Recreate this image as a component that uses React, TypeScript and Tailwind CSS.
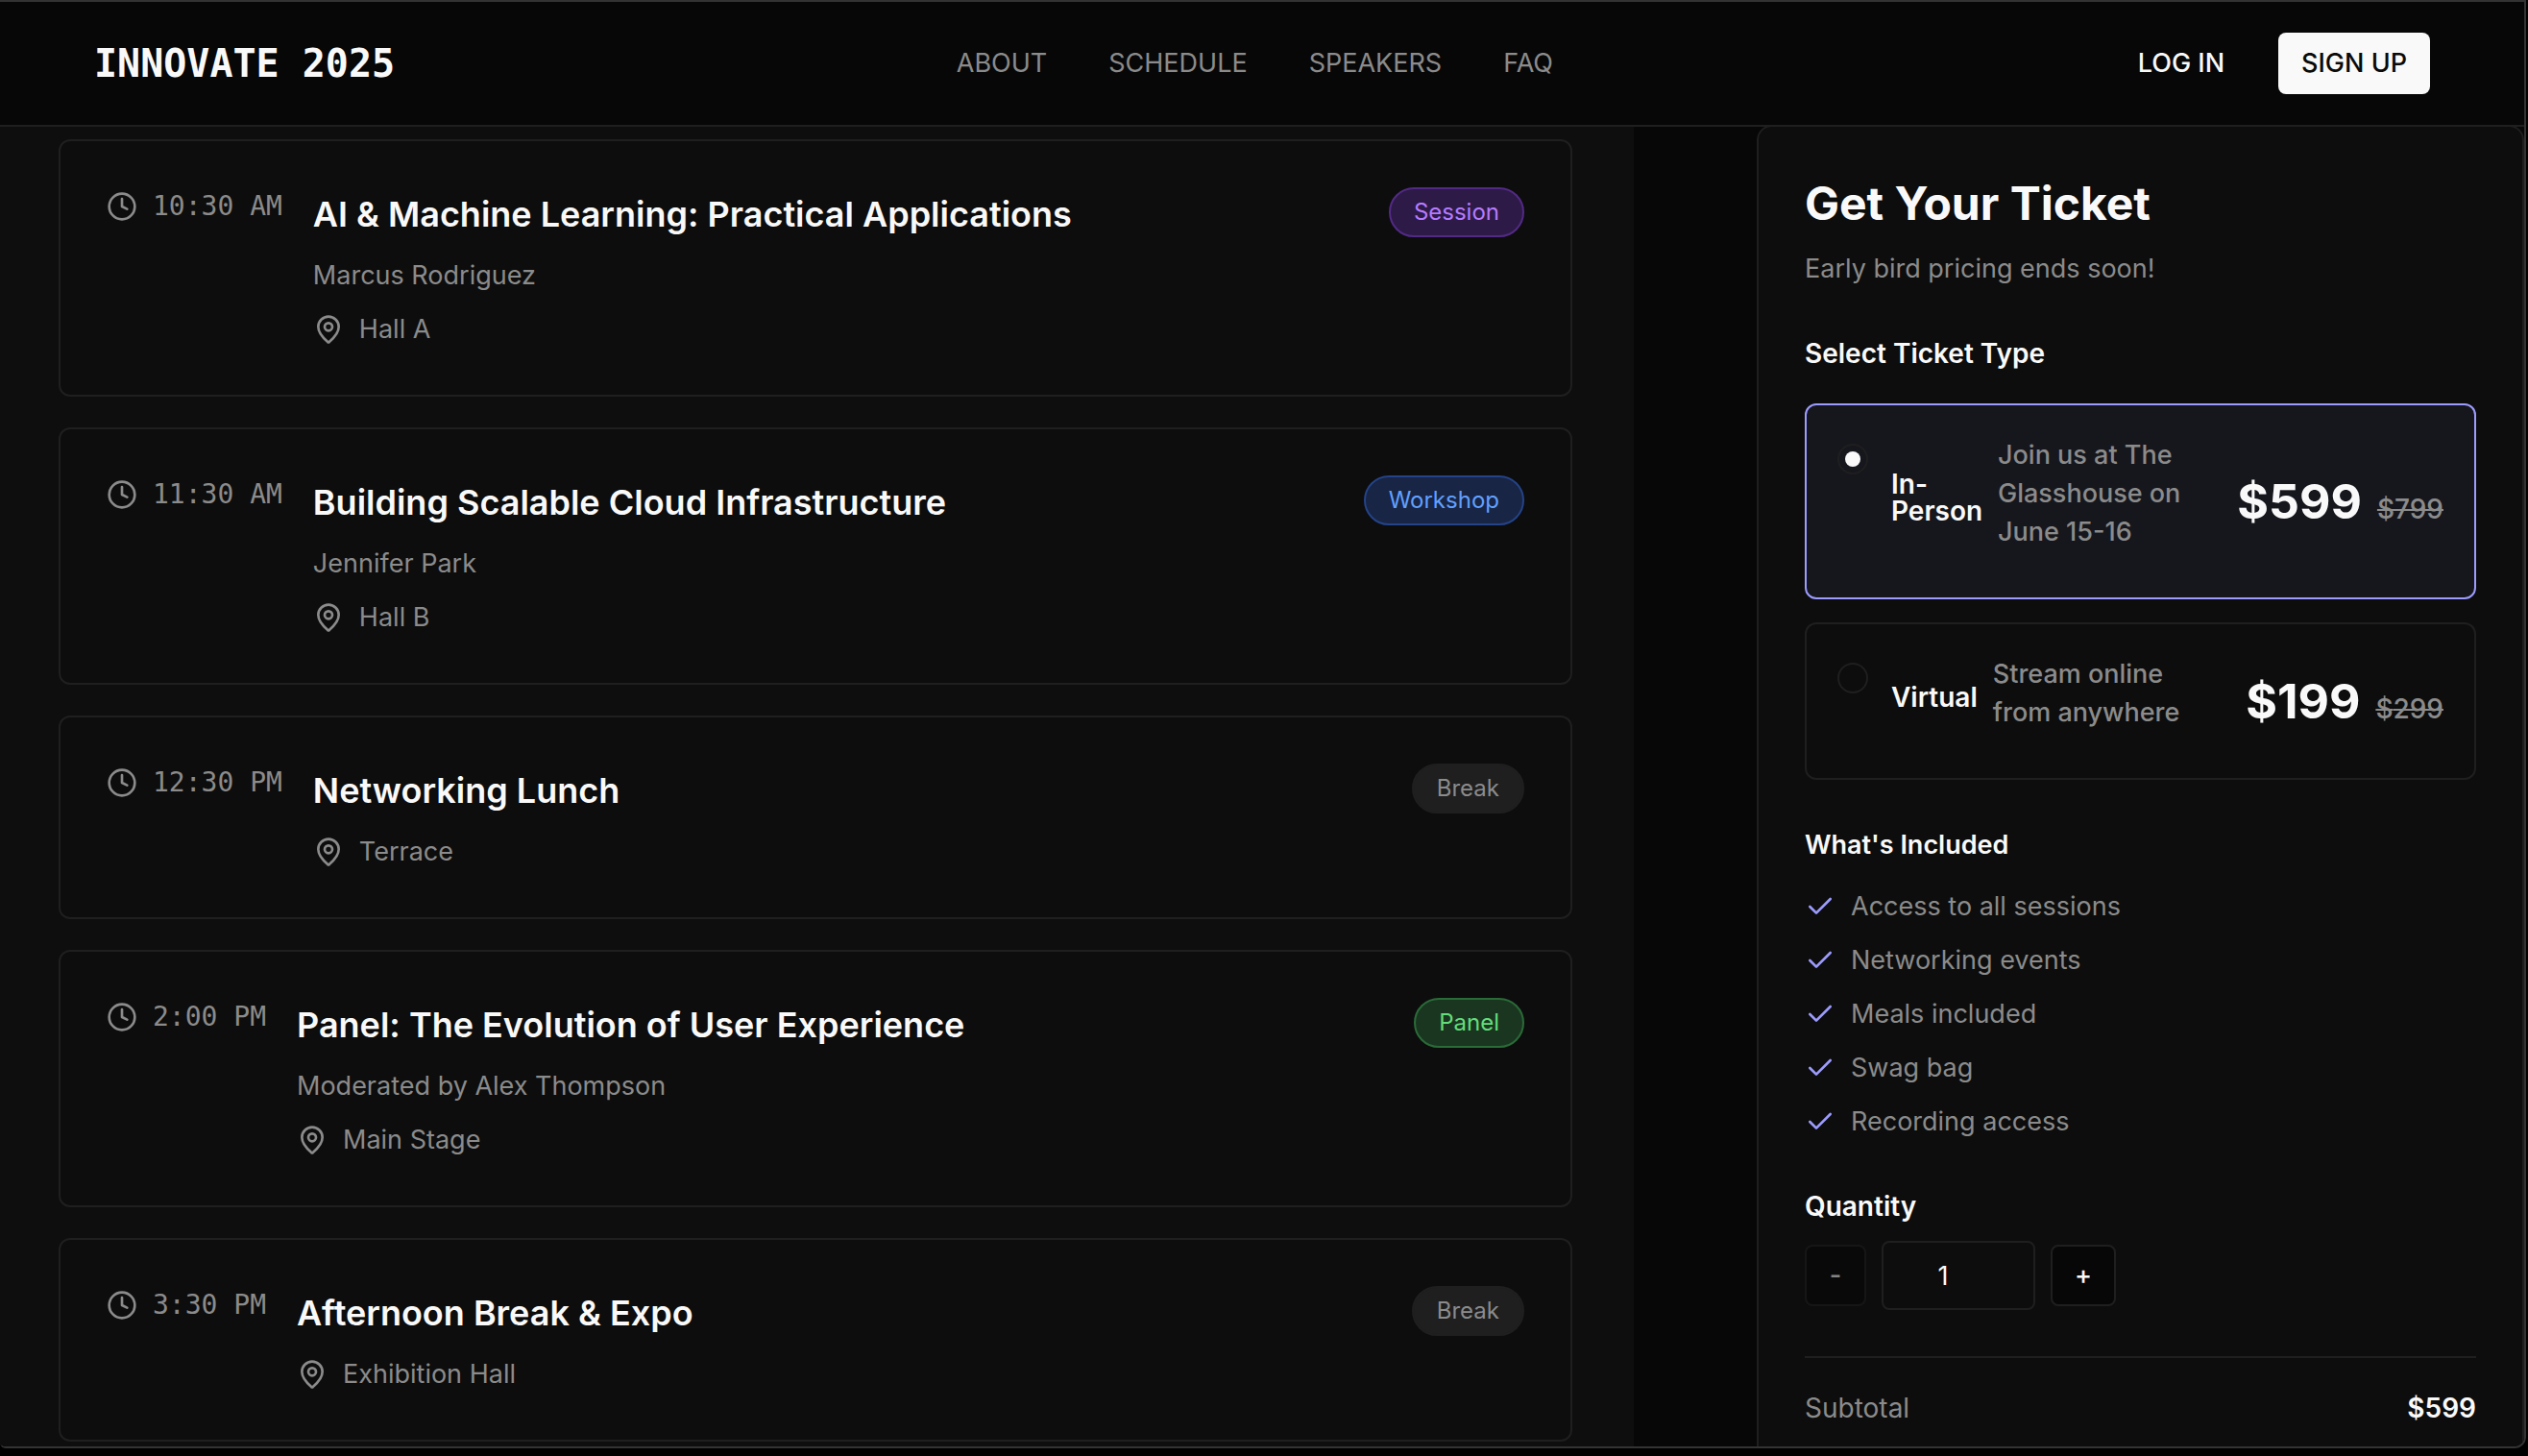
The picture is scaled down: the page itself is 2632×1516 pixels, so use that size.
import { Check, Clock, MapPin } from "lucide-react";
import { useState } from "react";

type Kind = "Session" | "Workshop" | "Break" | "Panel";

const badgeStyles: Record<Kind, string> = {
  Session: "border-[#522a86] bg-[#2e1a47] text-[#b57bff]",
  Workshop: "border-[#244388] bg-[#182544] text-[#61a0ff]",
  Panel: "border-[#2a6b38] bg-[#1b3620] text-[#62dd7b]",
  Break: "border-[#1f1f1f] bg-[#1f1f1f] text-[#8b8b8b]",
};

const sessions: { time: string; title: string; speaker?: string; place: string; kind: Kind }[] = [
  { time: "10:30 AM", title: "AI & Machine Learning: Practical Applications", speaker: "Marcus Rodriguez", place: "Hall A", kind: "Session" },
  { time: "11:30 AM", title: "Building Scalable Cloud Infrastructure", speaker: "Jennifer Park", place: "Hall B", kind: "Workshop" },
  { time: "12:30 PM", title: "Networking Lunch", place: "Terrace", kind: "Break" },
  { time: "2:00 PM", title: "Panel: The Evolution of User Experience", speaker: "Moderated by Alex Thompson", place: "Main Stage", kind: "Panel" },
  { time: "3:30 PM", title: "Afternoon Break & Expo", place: "Exhibition Hall", kind: "Break" },
];

const tickets = [
  { id: "in-person", name: "In-Person", nameWidth: "w-[95px]", text: "Join us at The Glasshouse on June 15-16", price: 599, old: 799 },
  { id: "virtual", name: "Virtual", nameWidth: "", text: "Stream online from anywhere", price: 199, old: 299 },
];

const included = ["Access to all sessions", "Networking events", "Meals included", "Swag bag", "Recording access"];

function Header() {
  return (
    <header className="relative z-10 flex h-[130px] shrink-0 items-center justify-between border-b-2 border-[#1f1f1f] bg-[#070707] px-[98px]">
      <a href="#top" className="font-['DejaVu_Sans_Mono',monospace] text-[40px] leading-[56px] font-bold whitespace-nowrap">
        INNOVATE 2025
      </a>
      <nav className="flex gap-16 text-[#8b8b8b]">
        <a href="#about">ABOUT</a>
        <a href="#schedule">SCHEDULE</a>
        <a href="#speakers">SPEAKERS</a>
        <a href="#faq">FAQ</a>
      </nav>
      <div className="flex items-center gap-8 font-medium">
        <button type="button" className="h-16 px-6">LOG IN</button>
        <button type="button" className="h-16 rounded-lg bg-[#f9f9f9] px-6 text-[#0a0a0a]">SIGN UP</button>
      </div>
    </header>
  );
}

function Schedule() {
  return (
    <section id="schedule" className="min-w-0 flex-1 bg-[#0e0e0e] pt-[13px] pr-16 pl-[61px]">
      <ul className="flex flex-col gap-8">
        {sessions.map((s) => (
          <li key={s.time} className="flex items-start gap-8 rounded-xl border-2 border-[#1f1f1f] bg-[#0d0d0d] p-12">
            <div className="flex items-center gap-4 text-[#8b8b8b]">
              <Clock className="size-8" aria-hidden />
              <time className="font-['DejaVu_Sans_Mono',monospace] text-[28px] leading-10 whitespace-nowrap">{s.time}</time>
            </div>
            <div className="flex min-w-0 flex-1 flex-col gap-4 text-[#8b8b8b]">
              <h3 className="text-[36px] leading-[56px] font-semibold text-[#f9f9f9]">{s.title}</h3>
              {s.speaker && <p>{s.speaker}</p>}
              <p className="flex items-center gap-4">
                <MapPin className="size-8" aria-hidden />
                {s.place}
              </p>
            </div>
            <span className={`rounded-full border-2 px-6 py-2 text-2xl ${badgeStyles[s.kind]}`}>{s.kind}</span>
          </li>
        ))}
      </ul>
    </section>
  );
}

function TicketPanel() {
  const [selected, setSelected] = useState("in-person");
  const [quantity, setQuantity] = useState(1);
  const unit = tickets.find((t) => t.id === selected)?.price ?? 0;

  return (
    <aside className="-mt-0.5 flex w-[799px] shrink-0 flex-col gap-12 rounded-t-2xl border-2 border-b-0 border-[#1f1f1f] bg-[#0d0d0d] p-12">
      <div className="flex flex-col gap-4">
        <h2 className="text-[48px] leading-[64px] font-bold">Get Your Ticket</h2>
        <p className="text-[#8b8b8b]">Early bird pricing ends soon!</p>
      </div>

      <fieldset>
        <legend className="mb-8 text-[28px] leading-10 font-semibold">Select Ticket Type</legend>
        <div className="flex flex-col gap-6">
          {tickets.map((t) => (
            <div
              key={t.id}
              className="flex justify-between gap-6 rounded-xl border-2 border-[#1f1f1f] p-8 has-checked:border-[#9c9bff] has-checked:bg-[#16171d]"
            >
              <div className="flex items-start gap-6">
                <input
                  type="radio"
                  name="ticket"
                  id={t.id}
                  checked={selected === t.id}
                  onChange={() => setSelected(t.id)}
                  className="mt-2 grid size-8 shrink-0 appearance-none place-items-center rounded-full border-2 border-[#1f1f1f] before:size-4 before:rounded-full checked:before:bg-[#f9f9f9]"
                />
                <label htmlFor={t.id} className="flex gap-4 font-medium">
                  <span className={`self-center pb-2 text-[28px] leading-7 font-semibold ${t.nameWidth}`}>{t.name}</span>
                  <span className="mb-4 w-[205px] text-[#8b8b8b]">{t.text}</span>
                </label>
              </div>
              <p className="flex items-baseline gap-4 self-center">
                <span className="text-[50px] leading-[64px] font-bold">${t.price}</span>
                <s className="text-[28px] leading-10 font-medium text-[#8b8b8b]">${t.old}</s>
              </p>
            </div>
          ))}
        </div>
      </fieldset>

      <div className="flex flex-col gap-6">
        <h3 className="font-semibold">What's Included</h3>
        <ul className="flex flex-col gap-4 text-[#8b8b8b]">
          {included.map((item) => (
            <li key={item} className="flex items-center gap-4">
              <Check className="size-8 text-[#9c9bff]" aria-hidden />
              {item}
            </li>
          ))}
        </ul>
      </div>

      <div className="flex flex-col gap-4">
        <label htmlFor="quantity" className="text-[28px] leading-10 font-semibold">Quantity</label>
        <div className="flex items-center gap-4 font-medium">
          <button
            type="button"
            aria-label="Decrease quantity"
            disabled={quantity === 1}
            onClick={() => setQuantity(quantity - 1)}
            className="h-16 w-16 rounded-lg border-2 border-[#1f1f1f] bg-[#070707] disabled:opacity-50"
          >
            -
          </button>
          <input
            id="quantity"
            inputMode="numeric"
            value={quantity}
            onChange={(e) => setQuantity(Math.max(1, Number(e.target.value) || 1))}
            className="h-18 w-40 rounded-lg border-2 border-[#1f1f1f] pr-14 pl-6 text-center font-normal"
          />
          <button
            type="button"
            aria-label="Increase quantity"
            onClick={() => setQuantity(quantity + 1)}
            className="h-16 w-17 rounded-lg border-2 border-[#1f1f1f] bg-[#070707]"
          >
            +
          </button>
        </div>
      </div>

      <div className="flex justify-between border-t-2 border-[#1f1f1f] pt-8 text-[28px] leading-10">
        <span className="text-[#8b8b8b]">Subtotal</span>
        <span className="font-semibold">${unit * quantity}</span>
      </div>
    </aside>
  );
}

export default function App() {
  return (
    <div className="h-screen bg-black pr-0.5 pb-2 font-[Inter,sans-serif] text-[27px] leading-10 text-[#f9f9f9]">
      <div className="flex h-full flex-col overflow-hidden rounded-br-xl rounded-bl-md border-y-2 border-r-2 border-[#333333] bg-[#070707]">
        <Header />
        <main className="flex min-h-0 flex-1 justify-between gap-32">
          <Schedule />
          <TicketPanel />
        </main>
      </div>
    </div>
  );
}
